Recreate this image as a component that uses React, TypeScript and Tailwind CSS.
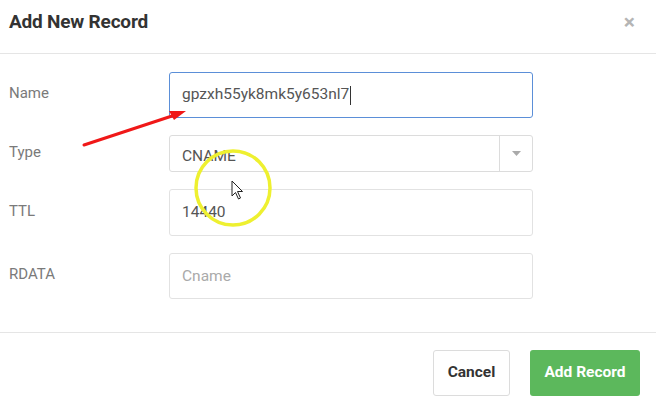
import React from 'react'

function Row({ label, children }: { label: string; children: React.ReactNode }) {
  return (
    <div className="flex items-center">
      <div className="w-[160px] pb-[3px] text-[15px] text-[#7a7a7a]">{label}</div>
      <div className="w-[364px]">{children}</div>
    </div>
  )
}

export default function App() {
  return (
    <div
      className="relative h-[406px] w-[656px] overflow-hidden bg-white"
      style={{ fontFamily: 'Roboto, "Liberation Sans", sans-serif' }}
    >
      <header className="flex h-[54px] items-center justify-between border-b border-[#e5e5e5] pb-[8px] pl-[9px] pr-[21px]">
        <h1 className="text-[19px] font-bold tracking-[-0.2px] text-[#333]">Add New Record</h1>
        <span className="text-[21px] font-bold leading-none text-[#b5b5b5]">×</span>
      </header>

      <main className="flex h-[279px] flex-col gap-[17px] border-b border-[#e5e5e5] px-[9px] pt-[18px]">
        <Row label="Name">
          <div className="flex h-[46px] items-center rounded-[3px] border border-[#5b8fd8] px-3 text-[15.5px] text-[#555]">
            gpzxh55yk8mk5y653nl7
            <span className="ml-[1px] inline-block h-[19px] w-px bg-[#333]" />
          </div>
        </Row>
        <Row label="Type">
          <div className="flex h-[37px] items-center rounded-[3px] border border-[#dcdcdc] text-[15.5px] text-[#555]">
            <span className="flex-1 px-3 pt-[7px]">CNAME</span>
            <span className="flex h-full w-[33px] items-center justify-center border-l border-[#dcdcdc]">
              <svg width="9" height="5" viewBox="0 0 9 5">
                <path d="M0 0h9L4.5 5z" fill="#aaa" />
              </svg>
            </span>
          </div>
        </Row>
        <Row label="TTL">
          <div className="flex h-[47px] items-center rounded-[3px] border border-[#e2e2e2] px-3 text-[15.5px] text-[#555]">
            14440
          </div>
        </Row>
        <Row label="RDATA">
          <div className="flex h-[46px] items-center rounded-[3px] border border-[#e2e2e2] px-3 pt-[2px] text-[15.5px] text-[#aaa]">
            Cname
          </div>
        </Row>
      </main>

      <footer className="flex justify-end gap-[20px] pr-[16px] pt-[17px]">
        <button className="h-[46px] w-[77px] rounded-[3px] border border-[#dcdcdc] bg-white text-[15.5px] font-bold text-[#333]">
          Cancel
        </button>
        <button className="h-[46px] w-[110px] rounded-[3px] bg-[#5cb85c] text-[15.5px] font-bold text-white">
          Add Record
        </button>
      </footer>

      <svg className="pointer-events-none absolute inset-0" width="656" height="406">
        <line x1="84" y1="145" x2="172" y2="116" stroke="#f01818" strokeWidth="3" strokeLinecap="round" />
        <path d="M186 111 L169 111 L174 120 Z" fill="#f01818" />
        <circle cx="233" cy="188" r="37" fill="none" stroke="#eef030" strokeWidth="3.5" />
        <path
          d="M232 181 L232 196 L235.5 192.5 L238.5 199 L240.5 198 L237.5 191.5 L242.5 191.5 Z"
          fill="white"
          stroke="#222"
          strokeWidth="1"
          strokeLinejoin="round"
        />
      </svg>
    </div>
  )
}
